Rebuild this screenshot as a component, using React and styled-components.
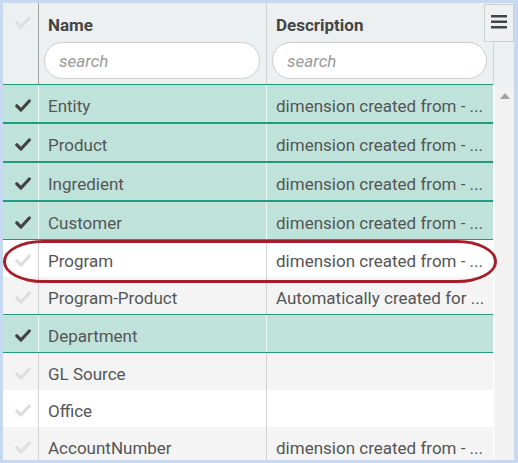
import React from "react";
import styled, { createGlobalStyle } from "styled-components";

const Global = createGlobalStyle`
  html, body { margin: 0; padding: 0; background: #c6d9f1; }
  body { font-family: Roboto, "Liberation Sans", Arial, sans-serif; }
  * { box-sizing: border-box; }
`;

const Frame = styled.div`
  width: 518px;
  height: 463px;
  padding: 3px 4px 3px 3px;
  background: #c6d9f1;
`;

const Grid = styled.div`
  position: relative;
  width: 511px;
  height: 457px;
  background: #f1f1f1;
  display: flex;
  flex-direction: column;
  overflow: hidden;
`;

const COLS = "35px 228px 227px 21px";

const Header = styled.div`
  display: grid;
  grid-template-columns: ${COLS};
  height: 81px;
  background: #edf0f1;
  flex-shrink: 0;
`;

const HeadCell = styled.div`
  display: flex;
  flex-direction: column;
  padding: 10px 6px 0 5px;
  gap: 4px;
  border-left: 1px solid ${(p) => (p.$dark ? "#a3a3a3" : "#cfd3d5")};
`;

const CheckHead = styled.div`
  display: flex;
  justify-content: center;
  padding-top: 13px;
  padding-left: 5px;
`;

const HeadTitle = styled.div`
  font-size: 17px;
  font-weight: 700;
  color: #454545;
  line-height: 25px;
  padding-left: 4px;
`;

const Search = styled.input`
  width: 100%;
  height: 37px;
  border: 1px solid #cccccc;
  border-radius: 19px;
  background: #ffffff;
  padding: 0 14px;
  font-family: inherit;
  font-size: 17px;
  color: #444;
  outline: none;
  &::placeholder {
    color: #9a9a9a;
    font-style: italic;
  }
`;

const ScrollHead = styled.div`
  border-left: 1px solid #cfd3d5;
`;

const MenuButton = styled.div`
  position: absolute;
  top: 1px;
  right: 0;
  width: 30px;
  height: 38px;
  background: #eef0f1;
  border: 1px solid #cdd0d2;
  display: flex;
  justify-content: center;
  padding-top: 10px;
`;

const Body = styled.div`
  display: flex;
  flex: 1;
  min-height: 0;
`;

const Rows = styled.div`
  width: 490px;
  display: flex;
  flex-direction: column;
  background: #ffffff;
`;

const Row = styled.div`
  display: grid;
  grid-template-columns: 35px 228px 227px;
  height: ${(p) => (p.$selected ? "39px" : "37px")};
  flex-shrink: 0;
  background: ${(p) => (p.$selected ? "#bfe3db" : p.$odd ? "#f4f4f4" : "#ffffff")};
  border-top: ${(p) => (p.$selected ? "1px solid #219a7d" : "none")};
  border-bottom: ${(p) => (p.$selected ? "1px solid #219a7d" : "none")};
`;

const Cell = styled.div`
  display: flex;
  align-items: center;
  padding: 4px 9px 0 9px;
  font-size: 17px;
  color: #555555;
  white-space: nowrap;
  overflow: hidden;
  border-left: 1px solid ${(p) => (p.$selected ? "rgba(255,255,255,0.75)" : "#d2d2d2")};
`;

const CheckCell = styled.div`
  display: flex;
  align-items: center;
  justify-content: center;
  padding: 3px 0 0 5px;
`;

const Scrollbar = styled.div`
  width: 21px;
  background: #f1f1f1;
  border-left: 2px solid #fafafa;
  display: flex;
  justify-content: center;
  padding-top: 9px;
`;

const Highlight = styled.div`
  position: absolute;
  left: 0;
  top: 237px;
  width: 494px;
  height: 43px;
  border: 3.5px solid #a51f2a;
  border-radius: 40px / 21px;
  pointer-events: none;
`;

const Check = ({ dark }) => (
  <svg width="16" height="13" viewBox="0 0 16 13">
    <path
      d="M1.8 6.8 L6 11 L14.3 2"
      fill="none"
      stroke={dark ? "#424242" : "#dedede"}
      strokeWidth="3.2"
      strokeLinecap="round"
      strokeLinejoin="round"
    />
  </svg>
);

const Hamburger = () => (
  <svg width="16" height="14" viewBox="0 0 16 14">
    <rect x="0" y="0" width="16" height="2.5" fill="#444" />
    <rect x="0" y="5.5" width="16" height="2.5" fill="#444" />
    <rect x="0" y="11" width="16" height="2.5" fill="#444" />
  </svg>
);

const UpArrow = () => (
  <svg width="10" height="6" viewBox="0 0 10 6">
    <path d="M0 6 L5 0 L10 6 Z" fill="#a3a3a3" />
  </svg>
);

const DIM = "dimension created from - ...";

const data = [
  { name: "Entity", desc: DIM, sel: true },
  { name: "Product", desc: DIM, sel: true },
  { name: "Ingredient", desc: DIM, sel: true },
  { name: "Customer", desc: DIM, sel: true },
  { name: "Program", desc: DIM, sel: false },
  { name: "Program-Product", desc: "Automatically created for ...", sel: false },
  { name: "Department", desc: "", sel: true },
  { name: "GL Source", desc: "", sel: false },
  { name: "Office", desc: "", sel: false },
  { name: "AccountNumber", desc: DIM, sel: false },
];

export default function App() {
  return (
    <>
      <Global />
      <Frame>
        <Grid>
          <Header>
            <CheckHead>
              <Check />
            </CheckHead>
            <HeadCell $dark>
              <HeadTitle>Name</HeadTitle>
              <Search placeholder="search" />
            </HeadCell>
            <HeadCell>
              <HeadTitle>Description</HeadTitle>
              <Search placeholder="search" />
            </HeadCell>
            <ScrollHead />
          </Header>
          <Body>
            <Rows>
              {data.map((r, i) => (
                <Row key={r.name} $selected={r.sel} $odd={i % 2 === 1}>
                  <CheckCell>
                    <Check dark={r.sel} />
                  </CheckCell>
                  <Cell $selected={r.sel}>{r.name}</Cell>
                  <Cell $selected={r.sel}>{r.desc}</Cell>
                </Row>
              ))}
            </Rows>
            <Scrollbar>
              <UpArrow />
            </Scrollbar>
          </Body>
          <MenuButton>
            <Hamburger />
          </MenuButton>
          <Highlight />
        </Grid>
      </Frame>
    </>
  );
}
